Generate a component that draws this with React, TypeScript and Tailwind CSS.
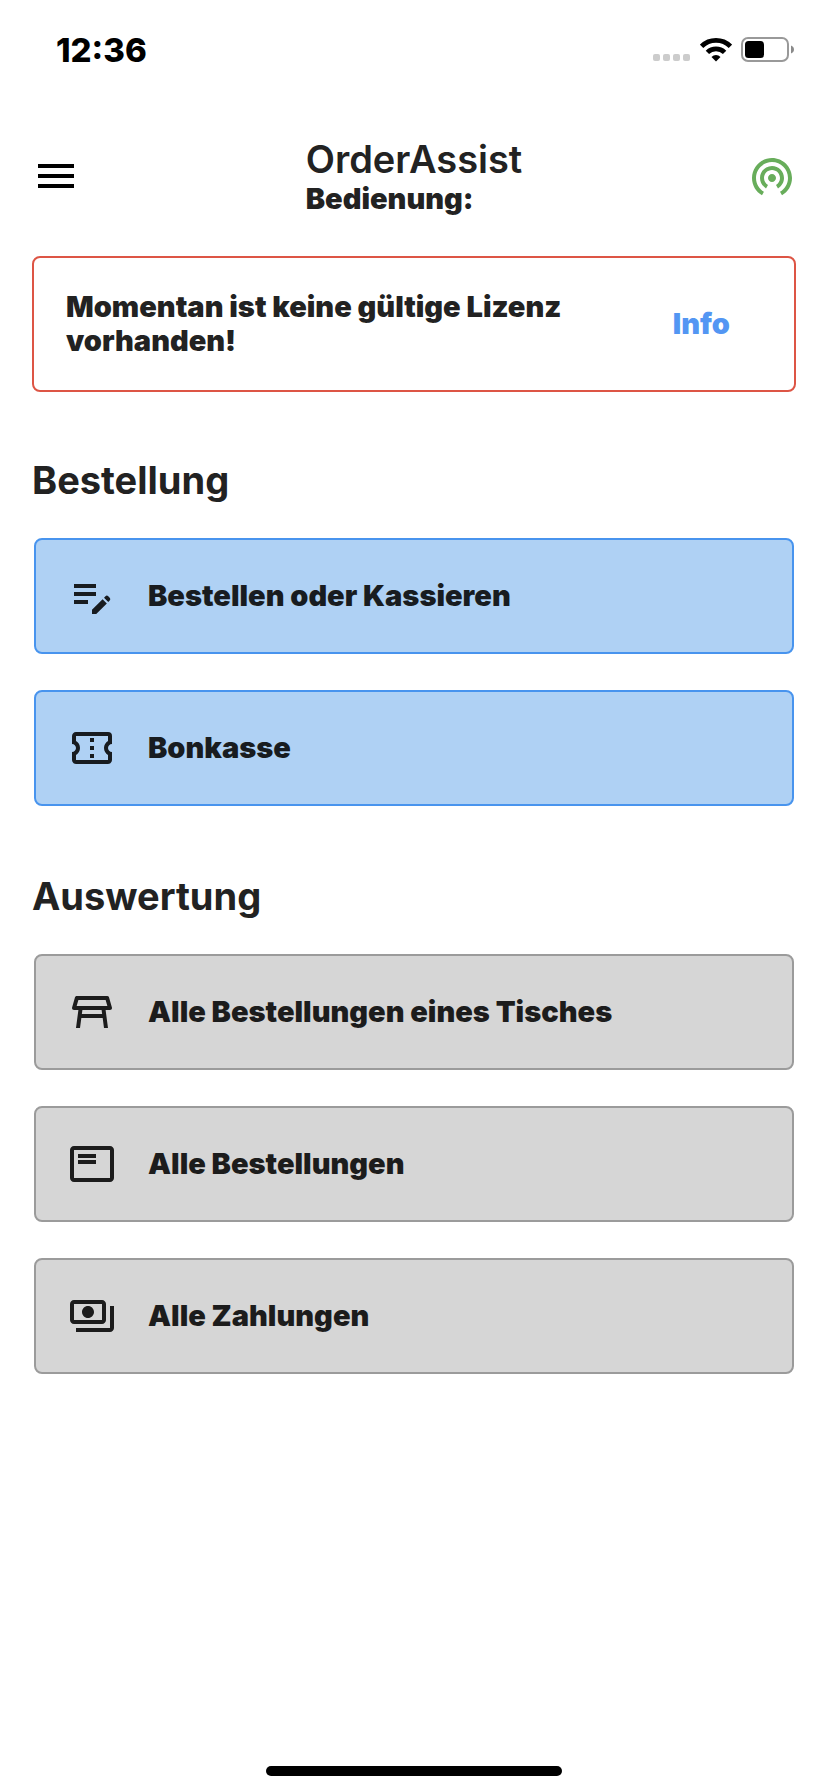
import type { IconType } from "react-icons";
import {
  MdEditNote,
  MdMenu,
  MdOutlineConfirmationNumber,
  MdOutlineFeaturedPlayList,
  MdOutlinePayments,
  MdOutlineTableRestaurant,
  MdWifiTethering,
} from "react-icons/md";

type Tone = "blue" | "gray";

interface Entry {
  label: string;
  icon: IconType;
}

const orderEntries: Entry[] = [
  { label: "Bestellen oder Kassieren", icon: MdEditNote },
  { label: "Bonkasse", icon: MdOutlineConfirmationNumber },
];

const reportEntries: Entry[] = [
  { label: "Alle Bestellungen eines Tisches", icon: MdOutlineTableRestaurant },
  { label: "Alle Bestellungen", icon: MdOutlineFeaturedPlayList },
  { label: "Alle Zahlungen", icon: MdOutlinePayments },
];

const tones: Record<Tone, string> = {
  blue: "border-[#4894ee] bg-[#afd1f4] text-[#181c20]",
  gray: "border-[#9b9b9b] bg-[#d6d6d6] text-[#1c1c1c]",
};

function StatusBar() {
  return (
    <div className="flex h-25 items-center justify-between pr-8 pl-14">
      <time className="text-[33px] leading-10 font-extrabold text-black">12:36</time>
      <div className="flex items-center">
        <svg className="h-6 w-[38px]" viewBox="0 0 38 24" fill="#cccccc" aria-hidden="true">
          <rect x="1" y="16" width="7" height="7" rx="2" />
          <rect x="11" y="16" width="7" height="7" rx="2" />
          <rect x="21" y="16" width="7" height="7" rx="2" />
          <rect x="31" y="16" width="7" height="7" rx="2" />
        </svg>
        <svg className="ml-2.5 h-6 w-8" viewBox="0 0 32 24" aria-hidden="true">
          <g fill="none" stroke="#000" strokeWidth="4.8">
            <path d="M1.6 8.3a20.6 20.6 0 0 1 28.8 0" />
            <path d="M7.4 14.4a12.3 12.3 0 0 1 17.2 0" />
          </g>
          <path d="M16 23.6l-4.5-4.7a6.5 6.5 0 0 1 9 0z" fill="#000" />
        </svg>
        <svg className="ml-2 h-[26px] w-[56px]" viewBox="0 0 56 26" aria-hidden="true">
          <rect x="2" y="1" width="46" height="23" rx="6" fill="none" stroke="#999" strokeWidth="2" />
          <rect x="5" y="4" width="19" height="17" rx="3.5" fill="#000" />
          <path d="M51 8.5c1.8.7 3 2.2 3 4s-1.2 3.3-3 4z" fill="#8a8a8a" />
        </svg>
      </div>
    </div>
  );
}

function Section({ title, entries, tone }: { title: string; entries: Entry[]; tone: Tone }) {
  return (
    <section className="mt-16">
      <h2 className="text-[38px] leading-12 font-bold">{title}</h2>
      <ul className="mx-0.5 mt-[34px] flex flex-col gap-9 pb-0.5">
        {entries.map(({ label, icon: Icon }) => (
          <li key={label}>
            <button
              type="button"
              className={`flex w-full items-center gap-8 rounded-lg border-2 px-8 py-8 text-left text-[29px] leading-12 font-black ${tones[tone]}`}
            >
              <Icon className="size-12 shrink-0" aria-hidden="true" />
              <span>{label}</span>
            </button>
          </li>
        ))}
      </ul>
    </section>
  );
}

export default function App() {
  return (
    <div className="flex min-h-screen flex-col bg-white font-['Inter',sans-serif] text-[#222222]">
      <StatusBar />
      <header className="flex h-[152px] items-center justify-between px-8">
        <button type="button" aria-label="Menü" className="text-black">
          <MdMenu className="size-12" />
        </button>
        <div className="flex flex-col pb-0.5">
          <h1 className="text-[38px] leading-12 font-semibold">OrderAssist</h1>
          <p className="text-[29px] leading-8 font-black">Bedienung:</p>
        </div>
        <button type="button" aria-label="Verbindung" className="text-[#68ad5b]">
          <MdWifiTethering className="size-12" />
        </button>
      </header>
      <main className="flex-1 px-8">
        <div className="mt-1 flex items-center justify-between rounded-lg border-2 border-[#dd5545] py-8 pr-16 pl-8 text-[29px] leading-[34px] font-black">
          <p className="max-w-[540px]">Momentan ist keine gültige Lizenz vorhanden!</p>
          <a href="#info" className="text-[#5396f3]">
            Info
          </a>
        </div>
        <Section title="Bestellung" entries={orderEntries} tone="blue" />
        <Section title="Auswertung" entries={reportEntries} tone="gray" />
      </main>
      <div className="mb-4 h-2.5 w-[296px] self-center rounded-full bg-black" />
    </div>
  );
}
